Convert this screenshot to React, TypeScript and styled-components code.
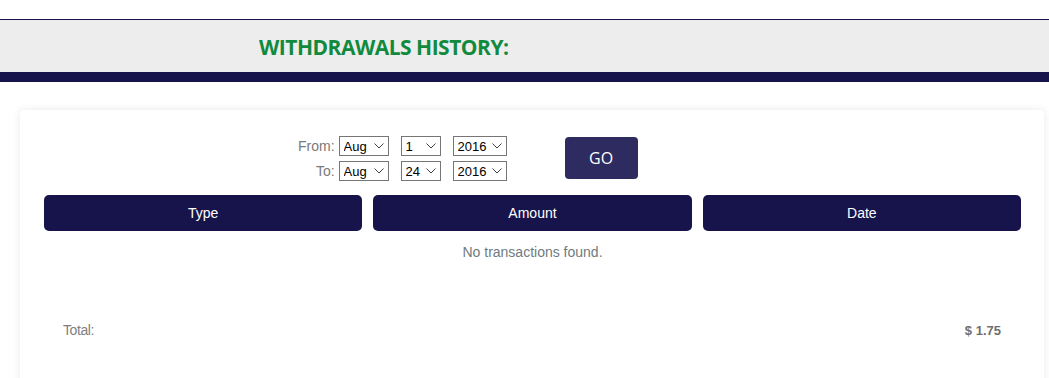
import React from 'react';
import styled, { createGlobalStyle } from 'styled-components';

const GlobalStyle = createGlobalStyle`
  body {
    margin: 0;
    background: #fff;
    font-family: 'Liberation Sans', Arial, sans-serif;
  }
`;

const Page = styled.div`
  padding-top: 19px;
`;

const TitleBand = styled.div`
  border-top: 1px solid #16144a;
  background: #ededed;
  height: 52px;
  border-bottom: 10px solid #16144a;
  display: flex;
  align-items: center;
  padding-left: 259px;
`;

const Title = styled.h1`
  margin: 0;
  font-family: 'Open Sans', sans-serif;
  font-weight: 700;
  font-size: 21px;
  letter-spacing: -0.5px;
  color: #128a3e;
  padding-top: 2px;
`;

const Card = styled.div`
  margin: 28px 5px 0 20px;
  background: #fff;
  border-radius: 4px;
  box-shadow: 0 0 8px rgba(0, 0, 0, 0.09);
  padding: 26px 23px 70px 24px;
`;

const FilterRow = styled.div`
  display: flex;
  align-items: center;
  padding-left: 254px;
`;

const DateGrid = styled.div`
  display: grid;
  grid-template-columns: auto auto auto auto;
  column-gap: 12px;
  row-gap: 5px;
  align-items: center;
`;

const Label = styled.span`
  color: #7a7a7a;
  font-size: 14px;
  text-align: right;
  margin-right: -8px;
`;

const SelectWrap = styled.span<{ w: number }>`
  position: relative;
  display: inline-block;
  width: ${(p) => p.w}px;
  height: 20px;
`;

const Select = styled.select`
  appearance: none;
  width: 100%;
  height: 100%;
  box-sizing: border-box;
  border: 1px solid #767676;
  border-radius: 0;
  background: #fff;
  font-family: 'Liberation Sans', Arial, sans-serif;
  font-size: 13px;
  color: #000;
  padding: 0 0 0 4px;
  outline: none;
`;

const Chevron = styled.svg`
  position: absolute;
  right: 5px;
  top: 7px;
  pointer-events: none;
`;

const GoButton = styled.button`
  margin-left: 58px;
  width: 73px;
  height: 42px;
  border: none;
  border-radius: 4px;
  background: #2d2b5f;
  color: #fff;
  font-family: 'Open Sans', sans-serif;
  font-size: 16px;
  align-self: flex-start;
  margin-top: 1px;
`;

const HeaderRow = styled.div`
  display: grid;
  grid-template-columns: repeat(3, 1fr);
  column-gap: 11px;
  margin-top: 14px;
`;

const HeaderCell = styled.div`
  background: #16144a;
  color: #fff;
  border-radius: 5px;
  height: 36px;
  display: flex;
  align-items: center;
  justify-content: center;
  font-size: 14px;
`;

const Empty = styled.div`
  text-align: center;
  color: #6f7b80;
  font-size: 14px;
  margin-top: 13px;
`;

const TotalRow = styled.div`
  display: flex;
  justify-content: space-between;
  align-items: baseline;
  padding: 0 20px 0 19px;
  margin-top: 62px;
  font-size: 14px;
  letter-spacing: -0.4px;
  color: #808080;
`;

const Amount = styled.span`
  font-weight: 700;
  font-size: 13px;
  letter-spacing: 0;
  color: #6f6f6f;
`;

const Dropdown = ({ value, options, w }: { value: string; options: string[]; w: number }) => (
  <SelectWrap w={w}>
    <Select defaultValue={value}>
      {options.map((o) => (
        <option key={o}>{o}</option>
      ))}
    </Select>
    <Chevron width="10" height="6" viewBox="0 0 10 6">
      <path d="M0.5 0.5 L5 5 L9.5 0.5" fill="none" stroke="#444" strokeWidth="1" />
    </Chevron>
  </SelectWrap>
);

const months = ['Jan', 'Feb', 'Mar', 'Apr', 'May', 'Jun', 'Jul', 'Aug', 'Sep', 'Oct', 'Nov', 'Dec'];
const days = Array.from({ length: 31 }, (_, i) => String(i + 1));
const years = ['2014', '2015', '2016'];

const App = () => (
  <>
    <GlobalStyle />
    <Page>
      <TitleBand>
        <Title>WITHDRAWALS HISTORY:</Title>
      </TitleBand>
      <Card>
        <FilterRow>
          <DateGrid>
            <Label>From:</Label>
            <Dropdown value="Aug" options={months} w={50} />
            <Dropdown value="1" options={days} w={40} />
            <Dropdown value="2016" options={years} w={54} />
            <Label>To:</Label>
            <Dropdown value="Aug" options={months} w={50} />
            <Dropdown value="24" options={days} w={40} />
            <Dropdown value="2016" options={years} w={54} />
          </DateGrid>
          <GoButton>GO</GoButton>
        </FilterRow>
        <HeaderRow>
          <HeaderCell>Type</HeaderCell>
          <HeaderCell>Amount</HeaderCell>
          <HeaderCell>Date</HeaderCell>
        </HeaderRow>
        <Empty>No transactions found.</Empty>
        <TotalRow>
          <span>Total:</span>
          <Amount>$ 1.75</Amount>
        </TotalRow>
      </Card>
    </Page>
  </>
);

export default App;
